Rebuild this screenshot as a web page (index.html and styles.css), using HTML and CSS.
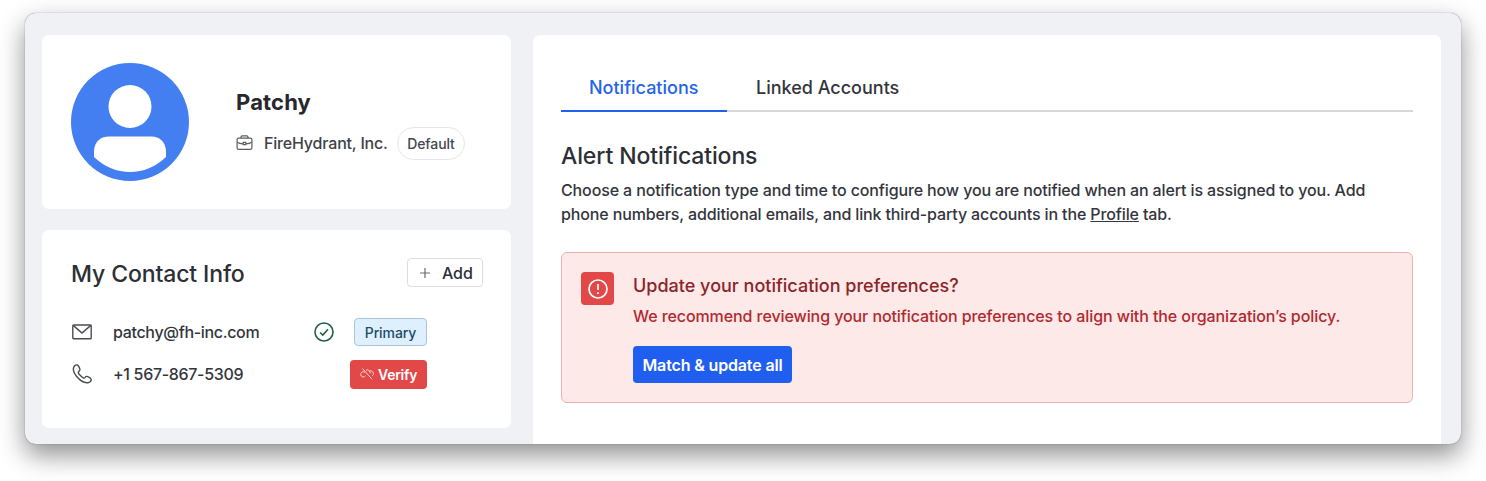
FILE: index.html
```html
<!DOCTYPE html>
<html lang="en">
<head>
  <meta charset="UTF-8">
  <meta name="viewport" content="width=device-width, initial-scale=1.0">
  <title>Profile - Notifications</title>
  <link rel="stylesheet" href="styles.css">
</head>
<body>
  <div class="window">
    <aside class="sidebar">
      <section class="card profile">
        <svg class="avatar" viewBox="0 0 118 118">
          <circle cx="59" cy="59" r="59" fill="#447ff1"/>
          <circle cx="59" cy="43.500" r="21.500" fill="#fff"/>
          <path d="M23 94V88Q24 74 38 73.500H80Q94 74 95 88V94Q79 109 59 109T23 94Z" fill="#fff"/>
        </svg>
        <div class="who">
          <h1 class="name">Patchy</h1>
          <div class="org">
            <svg class="icon-case" viewBox="0 0 16 16">
              <rect x=".6" y="3.100" width="14.800" height="11.300" rx="1.500"/>
              <path d="M4.500 3V2Q4.500.8 5.700.8H10.300Q11.500.8 11.500 2V3M.8 7.200Q3 8.800 6.500 8.800M9.500 8.800Q13 8.800 15.200 7.200M6.700 7.400H9.300V9.600H6.700Z"/>
            </svg>
            <span class="org-name">FireHydrant, Inc.</span>
            <span class="pill">Default</span>
          </div>
        </div>
      </section>

      <section class="card contact">
        <div class="contact-head">
          <h2 class="title contact-title">My Contact Info</h2>
          <button class="add" type="button">
            <svg class="icon-plus" viewBox="0 0 10 10"><path d="M5 0V10M0 5H10"/></svg>
            <span>Add</span>
          </button>
        </div>
        <div class="row">
          <svg class="icon-contact" viewBox="0 0 20 20">
            <rect x=".8" y="3" width="18.400" height="13.800" rx=".8"/>
            <path d="M1.200 3.400L10 11L18.800 3.400"/>
          </svg>
          <span class="value email">patchy@fh-inc.com</span>
          <svg class="icon-check" viewBox="0 0 20 20">
            <circle cx="10" cy="10" r="9"/>
            <path d="M6 10.500L8.800 13.100L14 7.200"/>
          </svg>
          <span class="tag primary">Primary</span>
        </div>
        <div class="row">
          <svg class="icon-contact" viewBox="0 0 20 20">
            <path d="M2.800 1.600C.4 3.600 1 8 4.300 12C8.500 17.300 12.500 19.200 16 18.700C17.800 18.400 19.300 17 19.200 15.300C19.100 14.300 15.500 12.200 14.400 12.400C13.300 12.600 13 14.200 11.900 14.200C10.500 14.100 6.300 10 6.200 8.400C6.200 7.400 7.900 6.900 7.900 5.800C8 4.500 6.500 1.400 5.300 1C4.500 .8 3.600 1 2.800 1.600Z"/>
          </svg>
          <span class="value phone">+1 567-867-5309</span>
          <button class="tag verify" type="button">
            <svg class="icon-unlink" viewBox="0 0 14 12">
              <path d="M2.500 .5L12 11.300M5.300 8C4.200 9.300 2.300 9.200 1.300 8.100C.2 6.700.7 4.400 2.500 3.800C3.400 3.500 4.300 3.700 5 4.300M6 2.400C7 1.400 8.500 1.700 9.200 3L10.500 5.200M9.200 3C11.200 2.500 12.800 3.300 13.300 4.800C13.700 6.200 13 7.500 11.800 8"/>
            </svg>
            <span>Verify</span>
          </button>
        </div>
      </section>
    </aside>

    <main class="card main">
      <nav class="tabs">
        <a class="tab active">Notifications</a>
        <a class="tab linked">Linked Accounts</a>
      </nav>
      <h2 class="title alert-title">Alert Notifications</h2>
      <p class="intro">
        Choose a notification type and time to configure how you are notified when an alert is assigned to you. Add<br>
        phone numbers, additional emails, and link third-party accounts in the <u>Profile</u> tab.
      </p>
      <div class="notice">
        <div class="notice-icon">
          <svg viewBox="0 0 20 20">
            <circle cx="10" cy="10" r="9"/>
            <path d="M10 5V11M10 13.300V15"/>
          </svg>
        </div>
        <div class="notice-body">
          <h3 class="notice-title">Update your notification preferences?</h3>
          <p class="notice-text">We recommend reviewing your notification preferences to align with the organization’s policy.</p>
          <button class="match" type="button">Match &amp; update all</button>
        </div>
      </div>
    </main>
  </div>
</body>
</html>
```
FILE: styles.css
```css
* {
  box-sizing: border-box;
}

body {
  margin: 0;
  height: 481px;
  padding: 13px 0 0 25px;
  background: #fff;
  color: #33353c;
  font-family: Inter, sans-serif;
  font-size: 16px;
  font-weight: 500;
  overflow: hidden;
}

h1, h2, h3, p {
  margin: 0;
}

button {
  border: 0;
  padding: 0;
  font: inherit;
  white-space: nowrap;
}

svg {
  display: block;
  flex: none;
  fill: none;
}

.window {
  display: flex;
  gap: 22px;
  width: 1436px;
  height: 431px;
  padding: 22px 20px 0 17px;
  border-radius: 11px;
  background: #eff1f5;
  overflow: hidden;
  box-shadow: 0 0 1px rgba(0, 0, 0, .6), 0 11px 26px rgba(0, 0, 0, .44);
}

.sidebar {
  display: flex;
  flex-direction: column;
  gap: 21px;
  width: 469px;
}

.card {
  border-radius: 7px;
  background: #fff;
}

.profile {
  display: flex;
  gap: 47px;
  height: 174px;
  padding: 28px 29px;
}

.avatar {
  width: 118px;
  height: 118px;
}

.who {
  padding-top: 25px;
}

.name {
  color: #26282e;
  font-size: 22px;
  line-height: 28px;
  font-weight: 700;
  letter-spacing: .15px;
}

.org {
  display: flex;
  align-items: center;
  margin-top: 11px;
  white-space: nowrap;
}

.icon-case {
  width: 17px;
  height: 16px;
  margin-top: -2px;
  stroke: #5a5c63;
  stroke-width: 1.2;
}

.org-name {
  width: 124px;
  margin: -2px 9px 0 11px;
  color: #3f4148;
  letter-spacing: -.18px;
}

.pill {
  width: 68px;
  height: 33px;
  border: 1px solid #e6e6ee;
  border-radius: 17px;
  color: #45474e;
  font-size: 14px;
  line-height: 32px;
  text-align: center;
  letter-spacing: -.1px;
}

.contact {
  height: 198px;
  padding: 28px 28px 0 29px;
}

.contact-head {
  display: flex;
  justify-content: space-between;
  align-items: center;
  height: 29px;
  margin-bottom: 24px;
}

.title {
  color: #2d2f36;
  font-size: 23px;
  line-height: 30px;
  font-weight: 500;
  letter-spacing: -.12px;
}

.contact-title {
  padding-top: 2px;
}

.add {
  display: flex;
  align-items: center;
  gap: 12px;
  width: 76px;
  height: 29px;
  padding-left: 12px;
  border: 1px solid #dcdce1;
  border-radius: 4px;
  background: #fff;
  color: #2d2f36;
  letter-spacing: -.1px;
}

.icon-plus {
  width: 10px;
  height: 10px;
  stroke: #6a6c72;
  stroke-width: 1.2;
}

.row {
  display: flex;
  align-items: center;
  width: 356px;
  height: 42px;
}

.icon-contact {
  width: 20px;
  height: 20px;
  margin: 0 21px 0 1px;
  stroke: #4a4c54;
  stroke-width: 1.4;
}

.value {
  white-space: nowrap;
  letter-spacing: -.33px;
}

.icon-check {
  width: 20px;
  height: 20px;
  margin: 0 20px 0 auto;
  stroke: #235e46;
  stroke-width: 1.6;
}

.tag {
  border-radius: 4px;
  font-size: 14px;
}

.primary {
  width: 73px;
  height: 28px;
  border: 1px solid #a9c5db;
  background: #def0fd;
  color: #234b66;
  line-height: 27px;
  text-align: center;
  letter-spacing: -.1px;
}

.verify {
  display: flex;
  align-items: center;
  gap: 4px;
  width: 77px;
  height: 29px;
  margin-left: auto;
  padding-left: 10px;
  background: #e24848;
  color: #fff;
  font-weight: 600;
  letter-spacing: -.25px;
}

.icon-unlink {
  width: 14px;
  height: 12px;
  stroke: #fbd5d5;
  stroke-width: 1;
}

.main {
  width: 908px;
  height: 440px;
  padding: 24px 28px 0;
}

.tabs {
  display: flex;
  height: 53px;
  border-bottom: 2px solid #d8d8db;
}

.tab {
  height: 53px;
  font-size: 18px;
  line-height: 57px;
  white-space: nowrap;
}

.active {
  width: 166px;
  padding-left: 28px;
  border-bottom: 2px solid #2060ea;
  color: #2463eb;
}

.linked {
  margin-left: 29px;
}

.alert-title {
  margin-top: 29px;
}

.intro {
  margin-top: 7px;
  line-height: 24px;
  letter-spacing: -.13px;
  white-space: nowrap;
}

.notice {
  display: flex;
  gap: 19px;
  height: 151px;
  margin-top: 26px;
  padding: 19px;
  border: 1px solid #e8b3b5;
  border-radius: 6px;
  background: #fce9e8;
}

.notice-icon {
  display: grid;
  place-items: center;
  width: 33px;
  height: 33px;
  border-radius: 4px;
  background: #e24848;
}

.notice-icon svg {
  width: 20px;
  height: 20px;
  stroke: #fff;
  stroke-width: 1.7;
}

.notice-title {
  color: #8b2429;
  font-size: 18px;
  line-height: 28px;
  font-weight: 500;
  white-space: nowrap;
}

.notice-text {
  margin-top: 4px;
  color: #b2282e;
  line-height: 24px;
  letter-spacing: -.085px;
  white-space: nowrap;
}

.match {
  width: 159px;
  height: 37px;
  margin-top: 18px;
  border-radius: 4px;
  background: #1f5eee;
  color: #fff;
  font-weight: 600;
  letter-spacing: -.15px;
}
```
